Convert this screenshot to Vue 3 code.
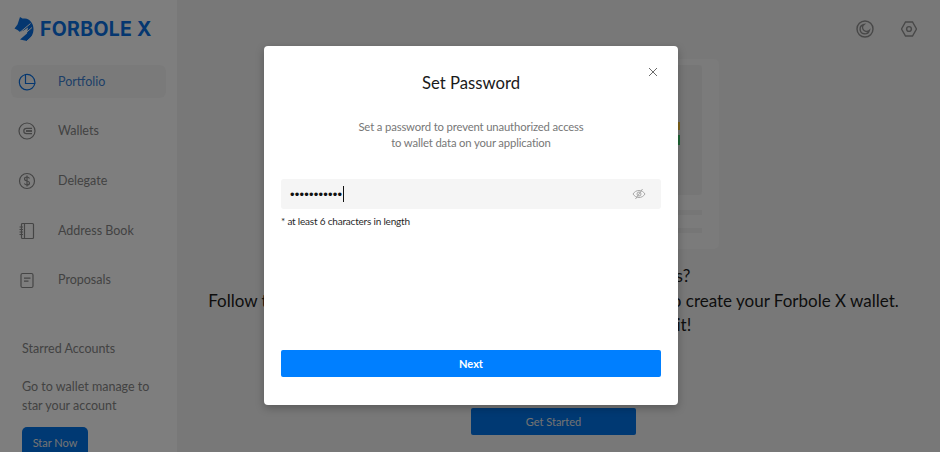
<script setup>
const nav = [
  { label: 'Portfolio', icon: 'pie', active: true },
  { label: 'Wallets', icon: 'wallet' },
  { label: 'Delegate', icon: 'dollar' },
  { label: 'Address Book', icon: 'book' },
  { label: 'Proposals', icon: 'doc' },
]
</script>

<template>
  <div class="app">
    <aside class="sidebar">
      <div class="logo">
        <svg class="logo-mark" width="20" height="26" viewBox="0 0 20 26">
          <path d="M6 1 8.500 2.500H11C16 3 19.500 7.500 19.500 13c0 5-2.500 9.500-6.500 12L6 23.500 13 17.500l1-6-4.500 3-3.500 1.500L3.500 14 .500 12.500 3.500 8.500 5 4z"/>
          <path class="stripe" d="M6.500 21.500 18 11.500M4 18 16.500 7.500M12.500 25.500 20 18.500"/>
        </svg>
        <span class="logo-text">FORBOLE X</span>
      </div>
      <nav class="nav">
        <div v-for="item in nav" :key="item.label" class="nav-item" :class="{ active: item.active }">
          <svg class="nav-icon" width="18" height="18" viewBox="0 0 18 18" fill="none" stroke="currentColor" stroke-width="1.200">
            <template v-if="item.icon === 'pie'">
              <path d="M7.500 1.500A7.800 7.800 0 1 0 16.800 10.500"/>
              <path d="M7.500 1.500a8 8 0 0 1 9.300 9H7.500z"/>
            </template>
            <template v-else-if="item.icon === 'wallet'">
              <circle cx="9" cy="9" r="8"/>
              <path d="M14 6.300H8.500a2.700 2.700 0 0 0 0 5.400H14"/>
              <path d="M8 9h6" stroke-width="1.800"/>
            </template>
            <template v-else-if="item.icon === 'dollar'">
              <circle cx="9" cy="9" r="7.500"/>
              <path d="M11.500 6.500c-.5-1-1.400-1.500-2.500-1.500-1.500 0-2.500.8-2.500 2S7.500 8.700 9 9s2.500 1 2.500 2-1 2-2.500 2c-1.200 0-2.100-.5-2.600-1.500M9 3.500v11"/>
            </template>
            <template v-else-if="item.icon === 'book'">
              <rect x="3.500" y="1.500" width="12" height="15" rx="1"/>
              <path d="M6.500 1.500v15M1.500 5h3.500M1.500 7.500h3.500M1.500 10h3.500M1.500 12.500h3.500"/>
            </template>
            <template v-else>
              <rect x="3" y="2.500" width="12" height="14" rx="1.500"/>
              <path d="M6 7.200h6.500M6 10.200h4.500"/>
            </template>
          </svg>
          <span>{{ item.label }}</span>
        </div>
      </nav>
      <div class="starred">
        <div class="starred-title">Starred Accounts</div>
        <p class="starred-text">Go to wallet manage to<br>star your account</p>
        <button class="star-btn">Star Now</button>
      </div>
    </aside>

    <main class="main">
      <header class="topbar">
        <svg width="18" height="18" viewBox="0 0 18 18" fill="none" stroke="#909090" stroke-width="1.400">
          <circle cx="9" cy="9" r="8"/>
          <path d="M8 4.500a4.700 4.700 0 1 0 5.300 6 4 4 0 0 1-5.300-6z"/>
        </svg>
        <svg width="16" height="16" viewBox="0 0 16 16" fill="none" stroke="#909090" stroke-width="1.400">
          <path d="M4.500 1h7L15.500 8l-4 7h-7L.500 8z"/>
          <circle cx="8" cy="8" r="2.400"/>
        </svg>
      </header>
      <section class="empty">
        <div class="illustration">
          <div class="chart">
            <i class="bar yellow"></i>
            <i class="bar green"></i>
          </div>
          <div class="line"></div>
          <div class="line"></div>
        </div>
        <p class="headline">
          Do not own any Forbole X accounts?<br>
          Follow the easy steps and the instructions in the guide below to create your Forbole X wallet.<br>
          It only takes a few moments to get it!
        </p>
        <button class="start-btn">Get Started</button>
      </section>
    </main>

    <div class="overlay">
      <div class="dialog">
        <svg class="close" width="10" height="10" viewBox="0 0 10 10" stroke="#6b6b6b" stroke-width="1">
          <path d="M1 1l8 8M9 1l-8 8"/>
        </svg>
        <h2 class="title">Set Password</h2>
        <p class="desc">Set a password to prevent unauthorized access<br>to wallet data on your application</p>
        <div class="input">
          <span class="dots">•••••••••••</span><span class="caret"></span>
          <svg class="eye" width="14" height="12" viewBox="0 0 14 12" fill="none" stroke="#a8a8a8" stroke-width="1">
            <path d="M1 6c1.500-2.300 3.500-3.500 6-3.500S11.500 3.700 13 6c-1.500 2.300-3.500 3.500-6 3.500S2.500 8.300 1 6z"/>
            <circle cx="7" cy="6" r="2"/>
            <path d="M10.500 1 3.500 11"/>
          </svg>
        </div>
        <div class="hint">* at least 6 characters in length</div>
        <button class="next-btn">Next</button>
      </div>
    </div>
  </div>
</template>

<style>
html, body { margin: 0; }
</style>

<style scoped>
.app {
  position: relative;
  display: flex;
  width: 940px;
  height: 452px;
  overflow: hidden;
  background: #f0f0f0;
  font-family: "Lato", "Noto Sans", sans-serif;
  color: #1a1a1a;
}
button { font-family: inherit; border: 0; cursor: pointer; }
p { margin: 0; }

.sidebar {
  flex: 0 0 177px;
  background: #fdfdfd;
  display: flex;
  flex-direction: column;
  box-sizing: border-box;
  padding: 16px 11px 0;
}
.logo { display: flex; align-items: center; gap: 6px; height: 26px; padding-left: 3px; }
.logo-mark path { fill: #0a6fe0; }
.logo-mark .stripe { fill: none; stroke: #fdfdfd; stroke-width: 1px; }
.logo-text {
  font-family: "Inter", sans-serif;
  font-weight: 700;
  font-size: 19.500px;
  letter-spacing: .3px;
  color: #0a6fe0;
}
.nav { margin-top: 23px; display: flex; flex-direction: column; gap: 16.700px; }
.nav-item {
  display: flex;
  align-items: center;
  height: 33px;
  width: 155px;
  border-radius: 6px;
  padding-left: 7px;
  box-sizing: border-box;
  font-size: 12.500px;
  line-height: 32px;
}
.nav-item span { margin-left: 22px; color: #858585; }
.nav-icon { flex: none; color: #8a8a8a; }
.nav-item.active { background: #f5f5f5; }
.nav-item.active .nav-icon { color: #0a6fe0; }
.nav-item.active span { color: #3c7fd0; }

.starred { margin-top: 42px; padding-left: 11px; }
.starred-title { font-size: 12.500px; line-height: 20px; color: #858585; }
.starred-text { margin-top: 18px; font-size: 12.500px; line-height: 19.600px; color: #858585; white-space: nowrap; }
.star-btn {
  margin-top: 11px;
  width: 66px;
  height: 32px;
  padding: 0;
  border-radius: 5px;
  background: #0072e6;
  color: #e8e8e8;
  font-size: 11px;
}

.main {
  flex: 1;
  box-sizing: border-box;
  padding-right: 10px;
  display: flex;
  flex-direction: column;
  min-width: 0;
}
.topbar {
  display: flex;
  justify-content: flex-end;
  align-items: center;
  gap: 27px;
  height: 18px;
  padding: 20px 13px 0 0;
}
.empty { display: flex; flex-direction: column; align-items: center; margin-top: 21px; }
.illustration {
  box-sizing: border-box;
  width: 330px;
  height: 190px;
  background: #f6f6f6;
  border-radius: 5px;
  padding: 6px 17px 0;
}
.chart { position: relative; height: 130px; background: #ededed; border-radius: 3px; margin-bottom: 15px; }
.bar { position: absolute; right: 21.500px; width: 2px; }
.bar.yellow { top: 57px; height: 8px; background: #ffc93b; }
.bar.green { top: 70px; height: 10px; background: #3ecb6b; }
.line { height: 5px; background: #ededed; margin-bottom: 13px; }
.headline {
  margin-top: 15px;
  font-size: 17px;
  line-height: 24.600px;
  text-align: center;
  white-space: nowrap;
  color: #1c1c1c;
}
.start-btn {
  margin-top: 70px;
  width: 165px;
  height: 27px;
  border-radius: 2px;
  background: #0072e6;
  color: #e4e4e4;
  font-size: 11px;
  flex: none;
}

.overlay {
  position: absolute;
  inset: 0;
  background: rgba(0, 0, 0, .5);
}
.dialog {
  position: absolute;
  left: 264px;
  top: 46px;
  width: 414px;
  height: 359px;
  box-sizing: border-box;
  padding: 0 17px;
  background: #fff;
  border-radius: 4px;
  display: flex;
  flex-direction: column;
  box-shadow: 0 3px 8px rgba(0, 0, 0, .25);
}
.close { position: absolute; top: 21px; right: 20px; }
.title {
  margin: 24px 0 0;
  text-align: center;
  font-size: 16.700px;
  line-height: 26px;
  font-weight: 400;
  color: #1a1a1a;
}
.desc {
  margin-top: 23px;
  text-align: center;
  font-size: 11.300px;
  letter-spacing: -.15px;
  line-height: 16px;
  color: #777;
}
.input {
  margin-top: 28px;
  height: 30px;
  background: #f5f5f5;
  border-radius: 3px;
  display: flex;
  align-items: center;
  padding: 0 15px 0 9px;
}
.dots { font-family: "Liberation Sans", sans-serif; font-size: 13px; letter-spacing: .2px; color: #111; line-height: 1; }
.caret { width: 1px; height: 16px; background: #111; margin-left: 1px; }
.eye { margin-left: auto; }
.hint { margin-top: 5px; font-size: 10px; letter-spacing: -.2px; line-height: 14px; color: #2a2a2a; }
.next-btn {
  margin-top: auto;
  margin-bottom: 28px;
  height: 27px;
  border-radius: 2px;
  background: #007fff;
  color: #fff;
  font-size: 11px;
  font-weight: 700;
  flex: none;
}
</style>
